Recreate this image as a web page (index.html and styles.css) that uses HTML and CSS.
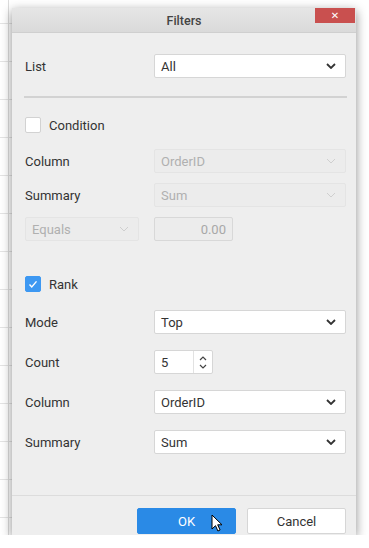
FILE: index.html
```html
<!DOCTYPE html>
<html lang="en">
<head>
  <meta charset="UTF-8">
  <title>Filters</title>
  <link rel="stylesheet" href="styles.css">
</head>
<body>
  <div class="stage">
    <div class="dialog">
      <div class="titlebar">
        <span class="title">Filters</span>
        <button class="close">&#x2715;</button>
      </div>

      <div class="content">
        <div class="row row-list">
          <label class="label">List</label>
          <div class="select">All<svg class="chev" viewBox="0 0 10 6"><path d="M1 1l4 4 4-4"/></svg></div>
        </div>

        <div class="divider"></div>

        <div class="check-row check-condition">
          <span class="checkbox"></span>
          <span>Condition</span>
        </div>

        <div class="row row-cond first">
          <label class="label">Column</label>
          <div class="select disabled">OrderID<svg class="chev" viewBox="0 0 10 6"><path d="M1 1l4 4 4-4"/></svg></div>
        </div>
        <div class="row row-cond">
          <label class="label">Summary</label>
          <div class="select disabled">Sum<svg class="chev" viewBox="0 0 10 6"><path d="M1 1l4 4 4-4"/></svg></div>
        </div>
        <div class="row row-cond">
          <div class="select disabled small">Equals<svg class="chev" viewBox="0 0 10 6"><path d="M1 1l4 4 4-4"/></svg></div>
          <div class="number disabled">0.00</div>
        </div>

        <div class="check-row check-rank">
          <span class="checkbox checked"><svg viewBox="0 0 16 16"><path d="M4 8.5l2.6 2.8L12 5"/></svg></span>
          <span>Rank</span>
        </div>

        <div class="row row-rank first">
          <label class="label">Mode</label>
          <div class="select">Top<svg class="chev" viewBox="0 0 10 6"><path d="M1 1l4 4 4-4"/></svg></div>
        </div>
        <div class="row row-rank">
          <label class="label">Count</label>
          <div class="spinner">
            <span class="spin-value">5</span>
            <span class="spin-arrows">
              <svg viewBox="0 0 8 5"><path d="M1 4l3-3 3 3"/></svg>
              <svg viewBox="0 0 8 5"><path d="M1 1l3 3 3-3"/></svg>
            </span>
          </div>
        </div>
        <div class="row row-rank">
          <label class="label">Column</label>
          <div class="select">OrderID<svg class="chev" viewBox="0 0 10 6"><path d="M1 1l4 4 4-4"/></svg></div>
        </div>
        <div class="row row-rank">
          <label class="label">Summary</label>
          <div class="select">Sum<svg class="chev" viewBox="0 0 10 6"><path d="M1 1l4 4 4-4"/></svg></div>
        </div>
      </div>

      <div class="footer">
        <button class="btn btn-primary">OK</button>
        <button class="btn">Cancel</button>
        <svg class="cursor" viewBox="0 0 12 18"><path d="M1 1v14l3.5-3.3 2.4 5.3 2.2-1-2.4-5.2H11z"/></svg>
      </div>
    </div>
  </div>
</body>
</html>
```

FILE: styles.css
```css
body {
  margin: 0;
  font-family: Roboto, 'Liberation Sans', sans-serif;
  font-size: 13px;
  color: #333;
  background-color: #fff;
  background-image:
    linear-gradient(to right, transparent 8px, #dcdcdc 8px, #dcdcdc 9px, transparent 9px),
    repeating-linear-gradient(to bottom, transparent 0, transparent 23px, #e4e4e4 23px, #e4e4e4 24px, transparent 24px, transparent 38px);
  background-size: 12px 100%, 12px 100%;
  background-repeat: no-repeat;
}
.stage {
  padding: 8px 0 0 12px;
}
.dialog {
  position: relative;
  width: 344px;
  height: 527px;
  background: #eeeeee;
  box-shadow: 0 3px 10px rgba(0,0,0,0.45);
  display: flex;
  flex-direction: column;
}
.titlebar {
  height: 24px;
  background: linear-gradient(#e6e6e6, #dadada);
  border-bottom: 1px solid #cfcfcf;
  display: flex;
  align-items: center;
  justify-content: center;
}
.title {
  font-size: 12.5px;
  font-weight: 500;
  color: #444;
  margin-top: 1px;
}
.close {
  position: absolute;
  top: 0;
  right: 1px;
  width: 40px;
  height: 15px;
  border: none;
  padding: 0;
  background: #c9504f;
  color: #fff;
  font-size: 10px;
  line-height: 15px;
  font-family: 'DejaVu Sans', sans-serif;
}
.content {
  flex: 1;
  padding: 0 10px 0 13px;
}
.row {
  display: flex;
  align-items: center;
  height: 24px;
}
.row-list { margin-top: 21px; }
.row-cond { margin-top: 10px; }
.row-cond.first { margin-top: 16px; }
.row-rank { margin-top: 16px; }
.row-rank.first { margin-top: 18px; }
.label {
  width: 129px;
  flex: none;
}
.select {
  flex: 1;
  height: 24px;
  box-sizing: border-box;
  background: #fff;
  border: 1px solid #d6d6d6;
  border-radius: 2px;
  padding: 0 9px 0 6px;
  display: flex;
  align-items: center;
  justify-content: space-between;
}
.chev {
  width: 10px;
  height: 6px;
  fill: none;
  stroke: #333;
  stroke-width: 1.8;
}
.select.disabled {
  background: #ececec;
  border-color: #e4e4e4;
  color: #b0b0b0;
}
.select.disabled .chev {
  stroke: #cfcfcf;
  stroke-width: 1;
}
.select.small {
  flex: none;
  width: 114px;
  margin-right: 15px;
}
.number {
  width: 79px;
  height: 24px;
  box-sizing: border-box;
  border: 1px solid #d8d8d8;
  border-radius: 2px;
  padding: 0 6px;
  display: flex;
  align-items: center;
  justify-content: flex-end;
}
.number.disabled {
  background: #ececec;
  color: #a8a8a8;
}
.divider {
  margin: 18px -1px 0 -1px;
  height: 2px;
  background: #d2d2d2;
}
.check-row {
  display: flex;
  align-items: center;
  gap: 8px;
  height: 16px;
}
.check-condition { margin-top: 19px; }
.check-rank { margin-top: 35px; }
.checkbox {
  width: 16px;
  height: 16px;
  box-sizing: border-box;
  background: #fff;
  border: 1px solid #d2d2d2;
  border-radius: 2px;
}
.checkbox.checked {
  background: #3d98f2;
  border-color: #3d98f2;
}
.checkbox svg {
  display: block;
  width: 14px;
  height: 14px;
  fill: none;
  stroke: #fff;
  stroke-width: 1.6;
}
.spinner {
  width: 59px;
  height: 24px;
  box-sizing: border-box;
  background: #fff;
  border: 1px solid #d6d6d6;
  border-radius: 2px;
  display: flex;
}
.spin-value {
  width: 39px;
  border-right: 1px solid #e2e2e2;
  padding-left: 6px;
  box-sizing: border-box;
  display: flex;
  align-items: center;
}
.spin-arrows {
  flex: 1;
  display: flex;
  flex-direction: column;
  align-items: center;
  justify-content: center;
  gap: 3px;
}
.spin-arrows svg {
  width: 8px;
  height: 5px;
  fill: none;
  stroke: #444;
  stroke-width: 1.2;
}
.footer {
  position: relative;
  border-top: 1px solid #dcdcdc;
  display: flex;
  justify-content: flex-end;
  align-items: flex-start;
  gap: 11px;
  padding: 12px 10px 0 0;
  box-sizing: border-box;
  height: 40px;
}
.btn {
  width: 99px;
  height: 26px;
  font-family: inherit;
  font-size: 13px;
  color: #333;
  background: #fff;
  border: 1px solid #d6d6d6;
  border-radius: 2px;
  padding: 0;
}
.btn-primary {
  background: #2a8ae6;
  border-color: #2a8ae6;
  color: #fff;
}
.cursor {
  position: absolute;
  left: 199px;
  top: 18px;
  width: 12px;
  height: 18px;
  fill: #fff;
  stroke: #000;
  stroke-width: 1;
}
```
